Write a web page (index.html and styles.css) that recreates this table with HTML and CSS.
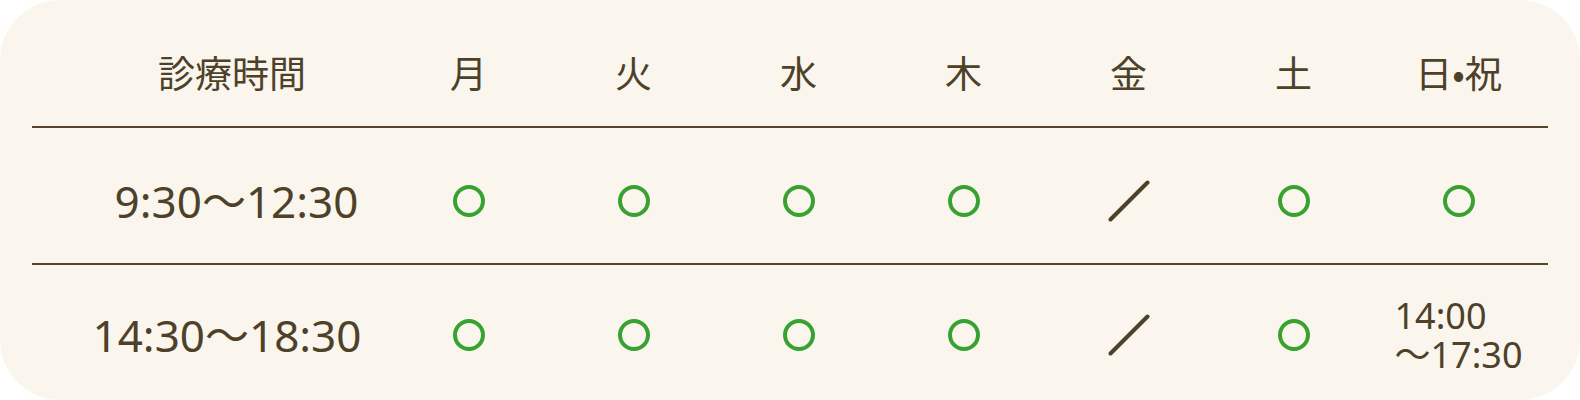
FILE: index.html
```html
<!DOCTYPE html>
<html lang="ja">
<head>
<meta charset="utf-8">
<title>診療時間</title>
<link rel="stylesheet" href="styles.css">
</head>
<body>
<div class="card">
  <div class="row row-head">
    <div class="cell label">診療時間</div>
    <div class="cell day">月</div>
    <div class="cell day">火</div>
    <div class="cell day">水</div>
    <div class="cell day">木</div>
    <div class="cell day">金</div>
    <div class="cell day">土</div>
    <div class="cell day">日•祝</div>
  </div>
  <div class="row row-am">
    <div class="cell label time time-am">9:30～12:30</div>
    <div class="cell"><svg class="mark-open" viewBox="0 0 32 32"><circle cx="16" cy="16" r="14"/></svg></div>
    <div class="cell"><svg class="mark-open" viewBox="0 0 32 32"><circle cx="16" cy="16" r="14"/></svg></div>
    <div class="cell"><svg class="mark-open" viewBox="0 0 32 32"><circle cx="16" cy="16" r="14"/></svg></div>
    <div class="cell"><svg class="mark-open" viewBox="0 0 32 32"><circle cx="16" cy="16" r="14"/></svg></div>
    <div class="cell"><svg class="mark-closed" viewBox="0 0 42 42"><line x1="2.5" y1="39.5" x2="39.5" y2="2.5"/></svg></div>
    <div class="cell"><svg class="mark-open" viewBox="0 0 32 32"><circle cx="16" cy="16" r="14"/></svg></div>
    <div class="cell"><svg class="mark-open" viewBox="0 0 32 32"><circle cx="16" cy="16" r="14"/></svg></div>
  </div>
  <div class="row row-pm">
    <div class="cell label time time-pm">14:30～18:30</div>
    <div class="cell"><svg class="mark-open" viewBox="0 0 32 32"><circle cx="16" cy="16" r="14"/></svg></div>
    <div class="cell"><svg class="mark-open" viewBox="0 0 32 32"><circle cx="16" cy="16" r="14"/></svg></div>
    <div class="cell"><svg class="mark-open" viewBox="0 0 32 32"><circle cx="16" cy="16" r="14"/></svg></div>
    <div class="cell"><svg class="mark-open" viewBox="0 0 32 32"><circle cx="16" cy="16" r="14"/></svg></div>
    <div class="cell"><svg class="mark-closed" viewBox="0 0 42 42"><line x1="2.5" y1="39.5" x2="39.5" y2="2.5"/></svg></div>
    <div class="cell"><svg class="mark-open" viewBox="0 0 32 32"><circle cx="16" cy="16" r="14"/></svg></div>
    <div class="cell"><span class="holiday-time">14:00<br>～17:30</span></div>
  </div>
</div>
</body>
</html>
```

FILE: styles.css
```css
html, body {
  margin: 0;
  padding: 0;
  background: #ffffff;
}

body {
  font-family: "Noto Sans CJK JP", "Noto Sans", sans-serif;
  color: #4e4129;
}

.card {
  width: 1580px;
  height: 400px;
  box-sizing: border-box;
  padding: 0 32px;
  background: #faf6ee;
  border-radius: 60px;
  overflow: hidden;
}

.row {
  display: grid;
  grid-template-columns: 354px repeat(7, 165px) 1fr;
  align-items: center;
  box-sizing: border-box;
}

.row-head {
  height: 128px;
  padding-top: 18px;
  border-bottom: 2px solid #54452b;
}

.row-am {
  height: 137px;
  padding-top: 11px;
  border-bottom: 2px solid #54452b;
}

.row-pm {
  height: 135px;
  padding-top: 5px;
}

.cell {
  display: flex;
  justify-content: center;
  align-items: center;
  line-height: 1;
}

.label {
  padding-left: 46px;
}

.row-head .cell {
  font-size: 37px;
}

.time {
  font-family: "Noto Sans", "Noto Sans CJK JP", sans-serif;
  font-size: 44px;
}

.time-am {
  padding-left: 55px;
}

.time-pm {
  padding-left: 36px;
}

.mark-open {
  width: 32px;
  height: 32px;
  display: block;
}

.mark-open circle {
  fill: none;
  stroke: #38a231;
  stroke-width: 4;
}

.mark-closed {
  width: 42px;
  height: 42px;
  display: block;
}

.mark-closed line {
  stroke: #4e4129;
  stroke-width: 4;
  stroke-linecap: round;
}

.holiday-time {
  display: inline-block;
  text-align: left;
  font-family: "Noto Sans", "Noto Sans CJK JP", sans-serif;
  font-size: 36px;
  line-height: 39px;
}
```
